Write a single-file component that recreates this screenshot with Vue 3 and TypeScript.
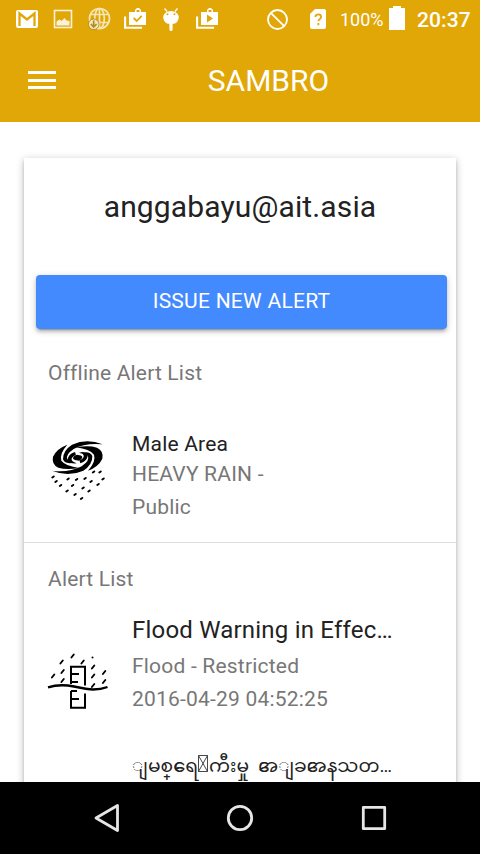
<script setup lang="ts">
interface AlertItem {
  title: string
  lines: string[]
}

const offline: AlertItem[] = [{ title: 'Male Area', lines: ['HEAVY RAIN -', 'Public'] }]
const alerts: AlertItem[] = [
  { title: 'Flood Warning in Effec…', lines: ['Flood - Restricted', '2016-04-29 04:52:25'] },
]

const stormDrops: number[][] = [
  [13, 47], [16, 51.5], [20.5, 55.5], [28, 49], [36.5, 49.5], [45, 48.5], [53.5, 42], [60, 42],
  [51, 51.5], [63, 49], [58, 54.5], [32.5, 55.5], [43, 58], [27, 61], [49, 61], [35, 64.5], [41.5, 68.5],
]
const floodDrops: number[][] = [
  [32.5, 11], [21.5, 17], [42.5, 17], [13, 31], [22.5, 26.5], [22.5, 35.5], [53, 22], [53, 31], [64, 27.5], [64, 36.5], [53, 40.5],
]
</script>

<template>
  <div class="phone">
    <header class="top">
      <div class="status">
        <svg class="status-icons" viewBox="0 0 240 40">
          <rect x="16" y="10" width="22" height="18" rx="2" fill="#fff" />
          <path d="M19.5 26V13.5L27 19.5l7.500-6V26" fill="none" stroke="#e1a707" stroke-width="2.3" />
          <g opacity=".85">
            <rect x="54.5" y="10.5" width="17" height="17" fill="none" stroke="#fff" stroke-width="1.6" />
            <path d="M56.5 25.500v-4l3-2 2 1.500 3-3 2 2.500 3 .500v4.500z" fill="#fff" />
          </g>
          <g fill="none" stroke="#f7e6b5" stroke-width="1.7">
            <circle cx="99.500" cy="18.500" r="10" />
            <ellipse cx="99.500" cy="18.500" rx="4.800" ry="10" />
            <path d="M99.500 8.500v20M90 14.500h19M90 22.500h19" />
            <circle cx="93.700" cy="24.300" r="5.300" fill="#f7e6b5" stroke="#b08a24" stroke-width=".9" />
            <path d="M93.700 20.500v6M90.800 24l2.900 3 2.900-3" stroke="#b08a24" stroke-width="1.700" />
          </g>
          <g v-for="x in [124, 196]" :key="x" :transform="`translate(${x} 8)`">
            <path d="M1.100 8.500v11.300h17" fill="none" stroke="#fff" stroke-width="2.100" />
            <path d="M6 4h5V2l2-2h2l2 2v2h5v13H5V4zM12.500 4h3V2h-3z" fill="#fff" fill-rule="evenodd" />
            <path v-if="x === 124" d="M9.700 10l3 3 5-5.200" fill="none" stroke="#e1a707" stroke-width="1.800" />
            <path v-else d="M11 6.500v8l6-4z" fill="#e1a707" />
          </g>
          <path d="M164.500 8.500l2.600 3M177.500 8.500l-2.600 3" stroke="#fff" stroke-width="1.300" />
          <path d="M163.200 16.500a7.900 6.600 0 0 1 15.600 0q0 5.500-4.500 7.300h-1.700v5.700a1.600 1.600 0 0 1-3.200 0v-5.700h-1.700q-4.500-1.800-4.500-7.300z" fill="#fff" />
          <circle cx="167.500" cy="14.300" r="1" fill="#e1a707" /><circle cx="174.500" cy="14.300" r="1" fill="#e1a707" />
        </svg>
        <svg class="signal" viewBox="0 0 90 40">
          <circle cx="37.500" cy="19.500" r="9.500" fill="none" stroke="#fff" stroke-width="1.800" />
          <path d="M30.800 12.800l13.400 13.400" stroke="#fff" stroke-width="1.800" />
          <path d="M75 9h9q2 0 2 2v16q0 2-2 2H72q-2 0-2-2V14z" fill="#fff" />
          <path d="M75.400 17q0-2.700 2.900-2.700 2.800 0 2.800 2.500 0 1.500-1.500 2.400-1.200.8-1.200 2.100M78.400 23v2.300" fill="none" stroke="#e1a707" stroke-width="1.800" />
        </svg>
        <span class="percent">100%</span>
        <svg class="battery" viewBox="0 0 16 24"><path d="M0 2h4V0h8v2h4v22H0z" fill="#fff" /></svg>
        <span class="clock">20:37</span>
      </div>
      <div class="toolbar">
        <button class="menu" aria-label="Menu"><i></i><i></i><i></i></button>
        <h1>SAMBRO</h1>
      </div>
    </header>

    <main>
      <section class="card">
        <h2 class="account">anggabayu@ait.asia</h2>
        <button class="issue">ISSUE NEW ALERT</button>
        <h3 class="list-title first">Offline Alert List</h3>
        <article v-for="a in offline" :key="a.title" class="item compact">
          <svg class="pic" viewBox="0 0 80 80">
            <g transform="scale(.33333)">
              <g v-for="r in [0, 180]" :key="r" :transform="`rotate(${r} 113 83)`">
                <path d="M38 123Q90 128 125 109 150 92 144 79 138 69 118 70 150 60 157 78 158 104 130 122 85 142 38 123z" />
                <path d="M82 44Q50 56 39 80 34 103 55 113 80 121 118 114 76 108 64 92 57 72 82 44z" />
                <path d="M113 92Q126 90 127 81 125 75 113 75 101 75 95 85 93 96 110 100 87 102 83 89 84 73 105 66" />
              </g>
            </g>
            <path v-for="([x, y], i) in stormDrops" :key="i" :d="`M${x - .7} ${y + .5}l1.500-1.100`" stroke="#000" stroke-width="1.900" stroke-linecap="round" />
          </svg>
          <div class="copy">
            <h4>{{ a.title }}</h4>
            <p v-for="l in a.lines" :key="l">{{ l }}</p>
          </div>
        </article>
        <h3 class="list-title second">Alert List</h3>
        <article v-for="a in alerts" :key="a.title" class="item large">
          <svg class="pic" viewBox="0 0 80 80">
            <path d="M31 39V21.800h14v18.700M31 29h8M31 37h7M31 46v16.700h14V48.500M31 46h6M31 54h8" fill="none" stroke="#000" stroke-width="2" />
            <path d="M8 42.300Q20 38.500 34 41.500T53 44.500Q61 44.500 67.500 42" fill="none" stroke="#000" stroke-width="2.400" />
            <path v-for="([x, y], i) in floodDrops" :key="i" :d="`M${x - 1.1} ${y + 1.5}l2.400-3`" stroke="#000" stroke-width="1.900" stroke-linecap="round" />
            <circle cx="52.500" cy="12.500" r="1" />
          </svg>
          <div class="copy">
            <h4>{{ a.title }}</h4>
            <p v-for="l in a.lines" :key="l">{{ l }}</p>
          </div>
        </article>
        <article class="item burmese">
          <div class="copy">
            <h4><span>ျ</span><span>မ</span><span>စ္</span><span class="lead">ရေ</span><span class="double">ရေ</span><svg class="missing" viewBox="0 0 10 17"><path d="M.5.5h9v16h-9zl9 16M9.500.500l-9 16" /></svg><span>ကီး</span><span class="word-end">မှု</span><span class="lead">အေ</span><span class="over">အ</span><span>ျ</span><span>ခ</span><span class="lead">အေ</span><span class="over">အ</span><span>နသတ…</span></h4>
          </div>
        </article>
      </section>
    </main>

    <nav>
      <svg viewBox="0 0 480 72" fill="none" stroke="#e6e6e6" stroke-width="2.800" stroke-linejoin="round">
        <path d="M117.500 23.500v25L96 36z" />
        <circle cx="240" cy="36" r="11.700" />
        <rect x="363.300" y="25.300" width="21.400" height="21.400" />
      </svg>
    </nav>
  </div>
</template>

<style>
body { margin: 0; }
</style>

<style scoped>
* { box-sizing: border-box; }
h1, h2, h3, h4, p { margin: 0; font-weight: 400; }
button { border: 0; padding: 0; font-family: inherit; }
.phone { width: 480px; height: 854px; display: flex; flex-direction: column; overflow: hidden; background: #fff; font-family: Roboto, "Noto Sans Myanmar", sans-serif; }
.top { height: 122px; flex: none; background: #e1a707; color: #fff; }
.status { height: 38px; display: flex; align-items: flex-start; }
.status-icons { width: 240px; height: 40px; flex: none; }
.signal { width: 90px; height: 40px; flex: none; }
.percent { width: 59px; padding-left: 10px; font-size: 18px; line-height: 40px; flex: none; }
.battery { width: 16px; height: 24px; margin-top: 6px; flex: none; }
.clock { padding-left: 12px; font-size: 21px; line-height: 40px; font-weight: 500; letter-spacing: .1px; }
.toolbar { height: 84px; display: grid; grid-template-columns: 56px 1fr; align-items: center; padding-left: 28px; }
.menu { width: 28px; display: flex; flex-direction: column; gap: 4.500px; background: none; }
.menu i { height: 3px; background: #fff; }
h1 { text-align: center; font-size: 30px; line-height: 40px; padding: 2px 27px 0 0; }
main { flex: 1; min-height: 0; overflow: hidden; padding: 36px 24px 0; }
.card { height: 900px; display: flex; flex-direction: column; background: #fff; box-shadow: 0 3px 3px rgba(0,0,0,.14), 0 4px 1px -3px rgba(0,0,0,.2), 0 2px 8px rgba(0,0,0,.25); color: #222; }
.account { text-align: center; font-size: 30px; line-height: 40px; letter-spacing: .13px; margin-top: 29px; }
.issue { width: 411px; height: 54px; margin: 48px 0 0 12px; flex: none; border-radius: 4px; background: #438aff; color: #fff; font-size: 21px; letter-spacing: .26px; padding-bottom: 3px; box-shadow: 0 3px 3px rgba(0,0,0,.14), 0 4px 1px -3px rgba(0,0,0,.2), 0 2px 7px rgba(0,0,0,.2); }
.list-title { font-size: 21px; line-height: 28px; letter-spacing: .18px; color: #777; padding-left: 24px; }
.first { margin-top: 30px; }
.second { margin-top: 22px; }
.item { display: flex; flex: none; padding-left: 16px; }
.pic { width: 80px; height: 80px; flex: none; }
.copy { margin-left: 12px; width: 270px; letter-spacing: .2px; }
.copy p { font-size: 21px; line-height: 33px; color: #777; }
.compact { height: 156px; padding-top: 43px; border-bottom: 1px solid #dedede; }
.compact h4 { font-size: 21px; line-height: 28px; }
.large { padding-top: 19px; height: 136px; }
.large .pic { margin-top: 33px; }
.large h4 { font-size: 24px; line-height: 36px; padding-bottom: 2px; white-space: nowrap; }
.burmese { padding-left: 96px; height: 60px; padding-top: 19px; }
.burmese h4 { font-size: 18.700px; line-height: 36px; letter-spacing: 0; white-space: nowrap; display: flex; }
.burmese .copy { width: 320px; }
.lead { width: 8.500px; overflow: hidden; }
.double { margin-left: -8px; }
.over { margin-left: -8.500px; }
.word-end { margin-right: 9px; }
.missing { width: 10px; height: 17px; margin: 7px 1px 0 0; flex: none; fill: none; stroke: #333; stroke-width: .9; }
nav { height: 72px; flex: none; background: #000; }
nav svg { display: block; width: 480px; height: 72px; }
</style>
